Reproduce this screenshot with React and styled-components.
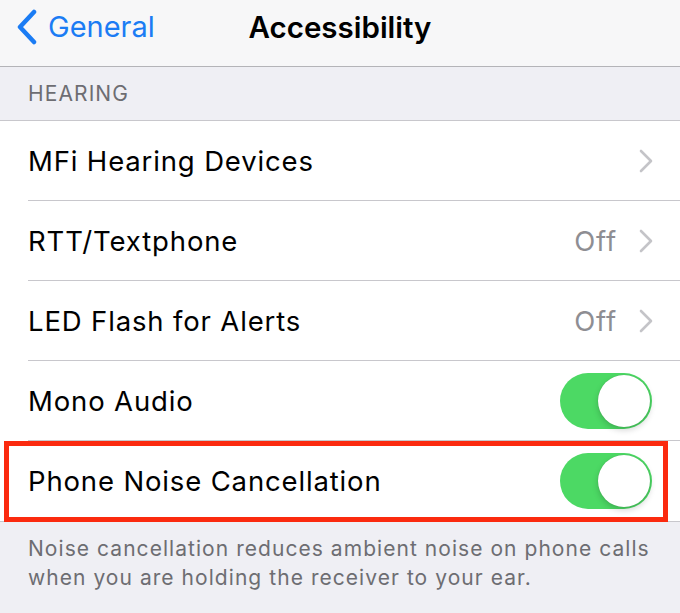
import React from "react";
import styled, { createGlobalStyle } from "styled-components";

const GlobalStyle = createGlobalStyle`
  html, body {
    margin: 0;
    padding: 0;
    background: #efeff4;
  }
  body {
    font-family: Inter, "Liberation Sans", sans-serif;
    -webkit-font-smoothing: antialiased;
  }
`;

const Screen = styled.div`
  width: 680px;
  height: 613px;
  overflow: hidden;
  background: #efeff4;
`;

const NavBar = styled.header`
  position: relative;
  height: 67px;
  padding-bottom: 13px;
  background: #f7f7f8;
  border-bottom: 1px solid #b4b4b8;
  display: flex;
  align-items: center;
  justify-content: center;
  box-sizing: border-box;
`;

const BackButton = styled.div`
  position: absolute;
  left: 16px;
  top: 0;
  bottom: 13px;
  display: flex;
  align-items: center;
  gap: 10px;
  color: #1b7cf4;
  font-size: 29px;
`;

const Title = styled.h1`
  margin: 0;
  font-size: 29.5px;
  font-weight: 600;
  color: #000;
`;

const SectionHeader = styled.div`
  height: 53px;
  padding: 0 28px;
  display: flex;
  align-items: center;
  font-size: 21px;
  color: #6d6d72;
  letter-spacing: 1.1px;
  box-sizing: border-box;
`;

const Group = styled.div`
  background: #fff;
  border-top: 1px solid #c8c7cc;
  border-bottom: 1px solid #c8c7cc;
`;

const Row = styled.div`
  position: relative;
  height: 80px;
  display: flex;
  align-items: center;
  padding: 0 28px;
  box-sizing: border-box;
  &:not(:last-child)::after {
    content: "";
    position: absolute;
    left: 28px;
    right: 0;
    bottom: 0;
    height: 1px;
    background: #c8c7cc;
  }
`;

const Highlight = styled.div`
  position: absolute;
  left: 4px;
  right: 12px;
  top: 0;
  bottom: -1px;
  border: 5px solid #fb2a0f;
  pointer-events: none;
`;

const Label = styled.span`
  flex: 1;
  font-size: 27.5px;
  color: #000;
  letter-spacing: 0.85px;
`;

const Detail = styled.span`
  font-size: 27.5px;
  color: #8e8e93;
  letter-spacing: 0.85px;
  margin-right: 22px;
`;

const Toggle = styled.div`
  width: 92px;
  height: 56px;
  border-radius: 28px;
  background: ${(p) => (p.on ? "#4cd964" : "#e5e5ea")};
  display: flex;
  align-items: center;
  justify-content: ${(p) => (p.on ? "flex-end" : "flex-start")};
  padding: 2px;
  box-sizing: border-box;
`;

const Knob = styled.div`
  width: 52px;
  height: 52px;
  border-radius: 50%;
  background: #fff;
  box-shadow: 0 3px 6px rgba(0, 0, 0, 0.18), 0 0 1px rgba(0, 0, 0, 0.2);
`;

const Footer = styled.p`
  margin: 0;
  padding: 12px 28px 0;
  font-size: 21px;
  line-height: 29px;
  letter-spacing: 1.05px;
  color: #6d6d72;
`;

const BackChevron = () => (
  <svg width="22" height="36" viewBox="0 0 22 36">
    <path
      d="M18 3 L4 18 L18 33"
      fill="none"
      stroke="#1b7cf4"
      strokeWidth="4.5"
      strokeLinecap="round"
      strokeLinejoin="round"
    />
  </svg>
);

const Chevron = () => (
  <svg width="14" height="24" viewBox="0 0 14 24" style={{ marginRight: -1 }}>
    <path
      d="M2 2 L12 12 L2 22"
      fill="none"
      stroke="#c4c4c8"
      strokeWidth="2.6"
      strokeLinecap="round"
      strokeLinejoin="round"
    />
  </svg>
);

const rows = [
  { label: "MFi Hearing Devices", type: "link" },
  { label: "RTT/Textphone", type: "link", detail: "Off" },
  { label: "LED Flash for Alerts", type: "link", detail: "Off" },
  { label: "Mono Audio", type: "switch", on: true },
  { label: "Phone Noise Cancellation", type: "switch", on: true, marked: true },
];

export default function App() {
  return (
    <Screen>
      <GlobalStyle />
      <NavBar>
        <BackButton>
          <BackChevron />
          <span>General</span>
        </BackButton>
        <Title>Accessibility</Title>
      </NavBar>
      <SectionHeader>HEARING</SectionHeader>
      <Group>
        {rows.map((row) => (
          <Row key={row.label}>
            <Label>{row.label}</Label>
            {row.detail && <Detail>{row.detail}</Detail>}
            {row.type === "link" && <Chevron />}
            {row.type === "switch" && (
              <Toggle on={row.on}>
                <Knob />
              </Toggle>
            )}
            {row.marked && <Highlight />}
          </Row>
        ))}
      </Group>
      <Footer>
        Noise cancellation reduces ambient noise on phone calls when you are
        holding the receiver to your ear.
      </Footer>
    </Screen>
  );
}
